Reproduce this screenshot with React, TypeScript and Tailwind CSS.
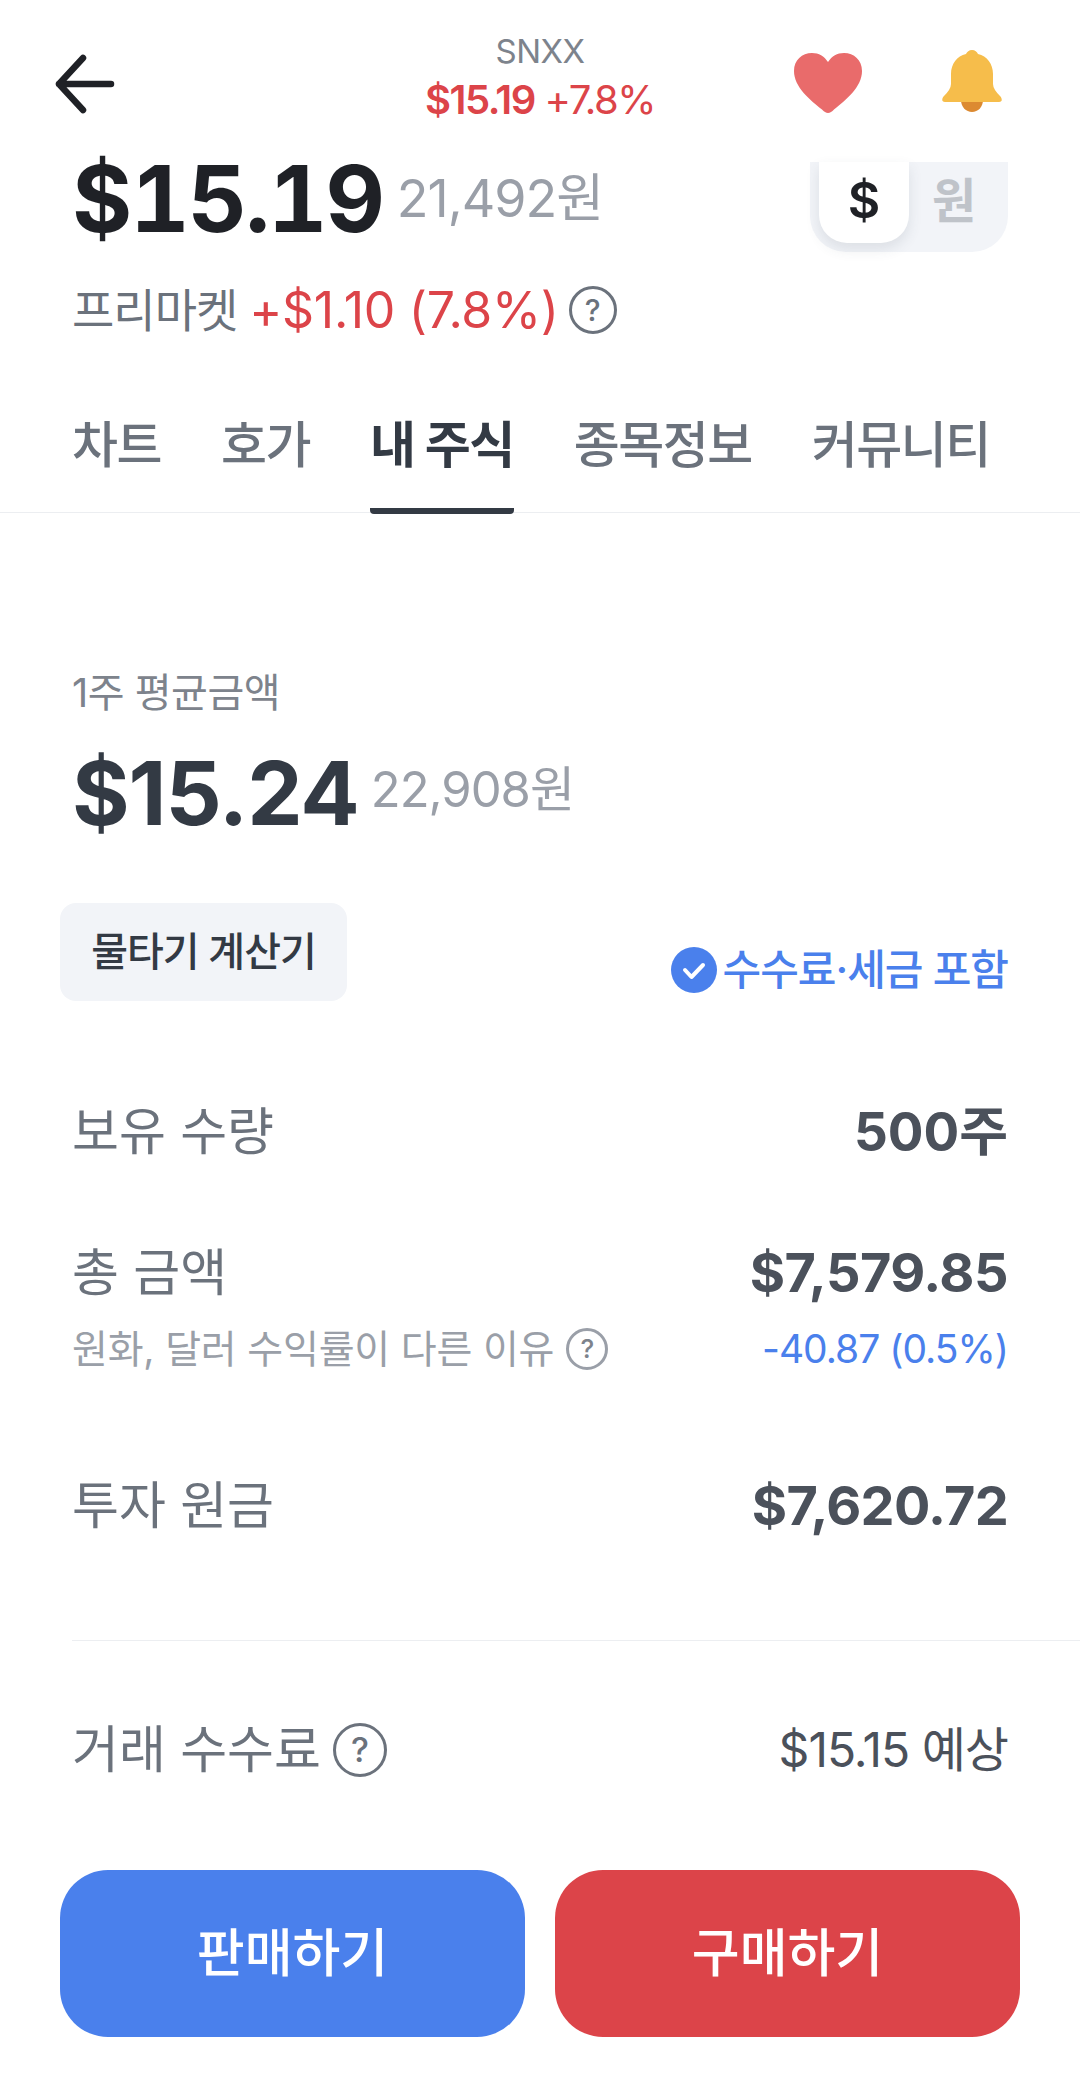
import { ReactNode } from 'react'

const fontStack = 'font-["Inter","Noto_Sans_CJK_KR",sans-serif]'

const tabs = ['차트', '호가', '내 주식', '종목정보', '커뮤니티']

function HelpIcon({ className }: { className: string }) {
  return (
    <span className={`flex shrink-0 items-center justify-center rounded-full border-[3px] font-medium ${className}`}>
      ?
    </span>
  )
}

function Row({ label, value, className }: { label: ReactNode; value: ReactNode; className: string }) {
  return (
    <div className={`flex items-center justify-between ${className}`}>
      <div className="text-[51px] leading-[56px] text-[#6b727c]">{label}</div>
      {value}
    </div>
  )
}

export default function App() {
  return (
    <div className={`flex h-[2085px] w-[1080px] flex-col overflow-hidden bg-white ${fontStack}`}>
      {/* Header */}
      <div className="flex h-[162px] shrink-0 items-start">
        <svg className="ml-[54px] mt-[54px] h-[60px] w-[62px]" viewBox="0 0 62 60" fill="none" stroke="#1f2126" strokeWidth="6.5" strokeLinecap="round" strokeLinejoin="round">
          <path d="M29 4 5 30l24 26M5 30h52" />
        </svg>
        <div className="ml-[304px] mt-[31px] flex w-[240px] flex-col items-center">
          <div className="text-[33px] leading-[40px] tracking-[-0.5px] text-[#7d838c]">SNXX</div>
          <div className="mt-[5px] whitespace-nowrap text-[40px] leading-[48px] tracking-[-1.5px] text-[#dc4449]">
            <span className="font-semibold">$15.19</span> <span>+7.8%</span>
          </div>
        </div>
        {/* Heart */}
        <svg className="ml-[134px] mt-[53px] h-[60px] w-[68px]" viewBox="0 0 68 60">
          <path d="M34 60c-2 0-4-1.500-6-3.500C16 47 0 34 0 18 0 7 8 0 18 0c7 0 12 3 16 9 4-6 9-9 16-9 10 0 18 7 18 18 0 16-16 29-28 38.500-2 2-4 3.500-6 3.500z" fill="#e96b6b" />
        </svg>
        {/* Bell */}
        <svg className="ml-[80px] mt-[50px] h-[62px] w-[60px]" viewBox="0 0 60 62">
          <path d="M19 50h22c0 7-5 12-11 12s-11-5-11-12z" fill="#dc8a31" />
          <path d="M30 0c3 0 5 2 6 4 9 2 15 10 15 20v10c0 4 3 8 7 12 2 2 3 6-1 6H3c-4 0-3-4-1-6 4-4 7-8 7-12V24C9 14 15 6 24 4c1-2 3-4 6-4z" fill="#f6bd4b" />
        </svg>
      </div>

      {/* Current price */}
      <div className="flex shrink-0 items-start justify-between pl-[72px] pr-[72px]">
        <div className="flex items-center">
          <span className="text-[92px] font-bold tabular-nums leading-[74px] tracking-[-2px] text-[#1f2126]">$15.19</span>
          <span className="ml-[14px] text-[52px] leading-[70px] tracking-[-1px] text-[#9a9fa8]">21,492원</span>
        </div>
        <div className="flex h-[90px] w-[198px] shrink-0 rounded-b-[36px] bg-[#f2f4f8] pl-[9px]">
          <div className="flex h-[81px] w-[90px] items-center justify-center rounded-b-[28px] bg-white pb-[4px] text-[50px] font-semibold text-[#1f2126] shadow-[0_6px_14px_rgba(60,70,90,0.12)]">
            $
          </div>
          <div className="flex h-[81px] w-[90px] items-center justify-center pb-[4px] text-[48px] font-bold text-[#bfc3c9]">
            원
          </div>
        </div>
      </div>

      {/* Premarket change */}
      <div className="mt-[30px] flex items-center pl-[72px] text-[46px] leading-[56px]">
        <span className="tracking-[-1px] text-[#6b727c]">프리마켓</span>
        <span className="ml-[12px] text-[50px] tracking-[-0.3px] text-[#dc4449]">+$1.10 (7.8%)</span>
        <HelpIcon className="ml-[10px] size-[48px] border-[#6b727c] text-[30px] text-[#6b727c]" />
      </div>

      {/* Tabs */}
      <div className="mt-[74px] flex h-[101px] shrink-0 gap-[60px] border-b border-[#eceef1] px-[72px]">
        {tabs.map((tab) => {
          const active = tab === '내 주식'
          return (
            <div
              key={tab}
              className={`-mb-px flex h-[102px] flex-col justify-start border-b-[6px] pt-[5px] text-[50px] leading-[56px] tracking-[-1.5px] ${
                active ? 'rounded-b-sm border-[#333a44] font-bold text-[#333a44]' : 'border-transparent font-medium text-[#6b727c]'
              }`}
            >
              {tab}
            </div>
          )
        })}
      </div>

      {/* Average price */}
      <div className="mt-[156px] pl-[72px] text-[40px] leading-[48px] tracking-[-0.5px] text-[#7d838c]">1주 평균금액</div>
      <div className="mt-[28px] flex items-center pl-[72px]">
        <span className="text-[88px] font-bold leading-[96px] tracking-[-1px] text-[#333a44]">$15.24</span>
        <span className="mb-[6px] ml-[12px] text-[49px] leading-[60px] tracking-[-1px] text-[#9a9fa8]">22,908원</span>
      </div>

      <div className="mt-[62px] flex items-end justify-between pl-[60px] pr-[72px]">
        <button className="flex h-[98px] w-[287px] items-center justify-center rounded-[16px] bg-[#f2f4f8] text-[40px] font-medium tracking-[-1px] text-[#333a44]">
          물타기 계산기
        </button>
        <div className="flex items-center pb-[8px] text-[42px] font-medium leading-[46px] tracking-[-1px] text-[#4a80ec]">
          <svg className="mr-[6px] size-[46px]" viewBox="0 0 46 46">
            <circle cx="23" cy="23" r="23" fill="#4a80ec" />
            <path d="m14 23 6.500 7L32 18" fill="none" stroke="#fff" strokeWidth="4" strokeLinecap="round" strokeLinejoin="round" />
          </svg>
          수수료·세금 포함
        </div>
      </div>

      {/* Holdings */}
      <Row
        className="mt-[103px] pl-[72px] pr-[72px]"
        label="보유 수량"
        value={<div className="text-[53px] font-bold leading-[56px] text-[#4b515b]">500주</div>}
      />

      <div className="mt-[85px] flex justify-between pl-[72px] pr-[72px]">
        <div>
          <div className="text-[51px] leading-[56px] text-[#6b727c]">총 금액</div>
          <div className="mt-[25px] flex items-center text-[39px] leading-[46px] tracking-[-0.2px] text-[#9a9fa8]">
            원화, 달러 수익률이 다른 이유
            <HelpIcon className="ml-[12px] size-[42px] border-[#9a9fa8] text-[26px] text-[#7d838c]" />
          </div>
        </div>
        <div className="flex flex-col items-end">
          <div className="text-[54px] font-bold leading-[56px] tracking-[-0.5px] text-[#4b515b]">$7,579.85</div>
          <div className="mt-[25px] text-[39px] leading-[46px] tracking-[-1px] text-[#4a80ec]">-40.87 (0.5%)</div>
        </div>
      </div>

      <Row
        className="mt-[106px] pl-[72px] pr-[72px]"
        label="투자 원금"
        value={<div className="text-[54px] font-bold leading-[56px] tracking-[-0.7px] text-[#4b515b]">$7,620.72</div>}
      />

      <div className="ml-[72px] mt-[106px] h-px shrink-0 bg-[#eceef1]" />

      <Row
        className="mt-[81px] pl-[72px] pr-[72px]"
        label={
          <div className="flex items-center">
            거래 수수료
            <HelpIcon className="ml-[12px] size-[54px] border-[#6b727c] text-[34px] text-[#6b727c]" />
          </div>
        }
        value={<div className="text-[48px] leading-[56px] tracking-[-1px] text-[#4b515b]">$15.15 예상</div>}
      />

      {/* Actions */}
      <div className="mt-[92px] flex gap-[30px] px-[60px]">
        <button className="flex h-[167px] w-[465px] items-center justify-center rounded-[48px] bg-[#4a80ec] text-[52px] font-medium text-white">
          판매하기
        </button>
        <button className="flex h-[167px] w-[465px] items-center justify-center rounded-[48px] bg-[#dc4449] text-[52px] font-medium text-white">
          구매하기
        </button>
      </div>
    </div>
  )
}
